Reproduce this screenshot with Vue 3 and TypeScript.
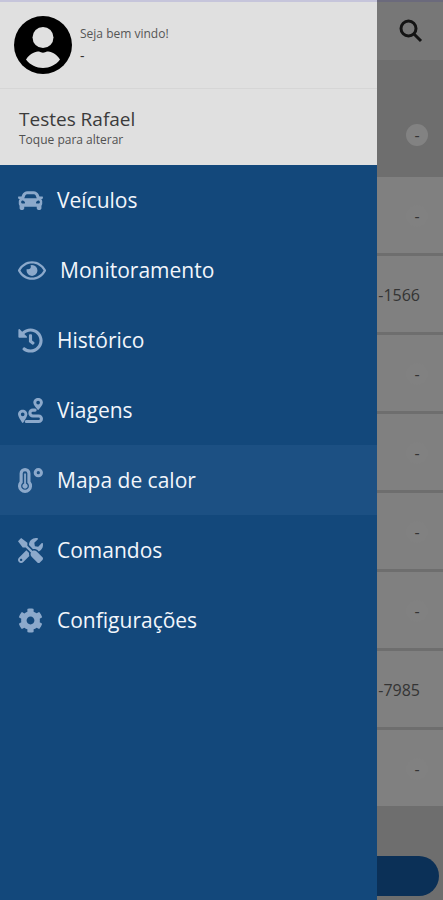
<script setup lang="ts">
import { ref } from 'vue'

interface MenuItem {
  id: string
  label: string
  viewBox: string
  path?: string
}

const items: MenuItem[] = [
  {
    id: 'veiculos',
    label: 'Veículos',
    viewBox: '0 0 512 512',
    path: 'M499.99 176h-59.87l-16.64-41.6C406.38 91.63 365.57 64 319.5 64h-127c-46.06 0-86.88 27.63-103.99 70.4L71.87 176H12.01C4.2 176-1.53 183.34.37 190.91l6 24C7.7 220.25 12.5 224 18.01 224h20.07C24.65 235.73 16 252.78 16 272v48c0 16.12 6.16 30.67 16 41.93V416c0 17.67 14.33 32 32 32h32c17.67 0 32-14.33 32-32v-32h256v32c0 17.67 14.33 32 32 32h32c17.67 0 32-14.33 32-32v-54.07c9.84-11.25 16-25.8 16-41.93v-48c0-19.22-8.65-36.27-22.07-48H494c5.51 0 10.31-3.75 11.64-9.09l6-24c1.89-7.57-3.84-14.91-11.65-14.91zm-352.06-17.83c7.29-18.22 24.94-30.17 44.57-30.17h127c19.63 0 37.28 11.95 44.57 30.17L384 208H128l19.93-49.83zM96 319.8c-19.2 0-32-12.76-32-31.9S76.8 256 96 256s48 28.71 48 47.85-28.8 15.95-48 15.95zm320 0c-19.2 0-48 3.19-48-15.95S396.8 256 416 256s32 12.76 32 31.9-12.8 31.9-32 31.9z',
  },
  {
    id: 'monitoramento',
    label: 'Monitoramento',
    viewBox: '0 0 576 512',
    path: 'M288 144a110.94 110.94 0 0 0-31.24 5 55.4 55.4 0 0 1 7.24 27 56 56 0 0 1-56 56 55.4 55.4 0 0 1-27-7.24A111.71 111.71 0 1 0 288 144zm284.52 97.4C518.29 135.59 410.93 64 288 64S57.68 135.64 3.48 241.41a32.35 32.35 0 0 0 0 29.19C57.71 376.41 165.07 448 288 448s230.32-71.64 284.52-177.41a32.35 32.35 0 0 0 0-29.19zM288 400c-98.65 0-189.09-55-237.93-144C98.91 167 189.34 112 288 112s189.09 55 237.93 144C477.1 345 386.66 400 288 400z',
  },
  {
    id: 'historico',
    label: 'Histórico',
    viewBox: '0 0 512 512',
    path: 'M504 255.531c.253 136.64-111.18 248.372-247.82 248.468-59.015.042-113.223-20.53-155.822-54.911-11.077-8.94-11.905-25.541-1.839-35.607l11.267-11.267c8.609-8.609 22.353-9.551 31.891-1.984C173.062 425.135 212.781 440 256 440c101.705 0 184-82.311 184-184 0-101.705-82.311-184-184-184-48.814 0-93.149 18.969-126.068 49.932l50.754 50.754c10.08 10.08 2.941 27.314-11.313 27.314H24c-8.837 0-16-7.163-16-16V38.627c0-14.254 17.234-21.393 27.314-11.314l49.372 49.372C129.209 34.136 189.552 8 256 8c136.81 0 247.747 110.78 248 247.531zm-180.912 78.784l9.823-12.63c8.138-10.463 6.253-25.542-4.21-33.679L288 256.349V152c0-13.255-10.745-24-24-24h-16c-13.255 0-24 10.745-24 24v135.651l65.409 50.874c10.463 8.137 25.541 6.253 33.679-4.21z',
  },
  { id: 'viagens', label: 'Viagens', viewBox: '0 0 512 512' },
  { id: 'mapa', label: 'Mapa de calor', viewBox: '0 0 512 512' },
  {
    id: 'comandos',
    label: 'Comandos',
    viewBox: '0 0 512 512',
    path: 'M501.1 395.7L384 278.6c-23.1-23.1-57.6-27.6-85.4-13.9L192 158.1V96L64 0 0 64l96 128h62.1l106.6 106.6c-13.6 27.8-9.2 62.3 13.9 85.4l117.1 117.1c14.6 14.6 38.2 14.6 52.7 0l52.7-52.7c14.5-14.6 14.5-38.2 0-52.7zM331.7 225c28.3 0 54.9 11 74.9 31l19.4 19.4c15.8-6.9 30.8-16.5 43.8-29.5 37.1-37.1 49.7-89.3 37.9-136.7-2.2-9-13.5-12.1-20.1-5.5l-74.4 74.4-67.9-11.3L334 98.9l74.4-74.4c6.6-6.6 3.4-17.9-5.7-20.2-47.4-11.7-99.6.9-136.6 37.9-28.5 28.5-41.9 66.1-41.2 103.6l82.1 82.1c8.1-1.9 16.5-2.9 24.7-2.9zm-103.9 82l-56.7-56.7L18.7 402.8c-25 25-25 65.5 0 90.5s65.5 25 90.5 0l123.6-123.6c-7.6-19.9-9.9-41.6-5-62.7zM64 472c-13.2 0-24-10.8-24-24 0-13.3 10.7-24 24-24s24 10.7 24 24c0 13.2-10.7 24-24 24z',
  },
  {
    id: 'config',
    label: 'Configurações',
    viewBox: '0 0 512 512',
    path: 'M487.4 315.7l-42.6-24.6c4.3-23.2 4.3-47 0-70.2l42.6-24.6c4.9-2.8 7.1-8.6 5.5-14-11.1-35.6-30-67.8-54.7-94.6-3.8-4.1-10-5.1-14.8-2.3L380.8 110c-17.9-15.4-38.5-27.3-60.8-35.1V25.8c0-5.6-3.9-10.5-9.4-11.7-36.7-8.2-74.3-7.8-109.2 0-5.5 1.2-9.4 6.1-9.4 11.7V75c-22.2 7.9-42.8 19.8-60.8 35.1L88.7 85.5c-4.9-2.8-11-1.9-14.8 2.3-24.7 26.7-43.6 58.9-54.7 94.6-1.7 5.4.6 11.2 5.5 14L67.3 221c-4.3 23.2-4.3 47 0 70.2l-42.6 24.6c-4.9 2.8-7.1 8.6-5.5 14 11.1 35.6 30 67.8 54.7 94.6 3.8 4.1 10 5.1 14.8 2.3l42.6-24.6c17.9 15.4 38.5 27.3 60.8 35.1v49.2c0 5.6 3.9 10.5 9.4 11.7 36.7 8.2 74.3 7.8 109.2 0 5.5-1.2 9.4-6.1 9.4-11.7v-49.2c22.2-7.9 42.8-19.8 60.8-35.1l42.6 24.6c4.9 2.8 11 1.9 14.8-2.3 24.7-26.7 43.6-58.9 54.7-94.6 1.5-5.5-.7-11.3-5.6-14.1zM256 336c-44.1 0-80-35.9-80-80s35.9-80 80-80 80 35.9 80 80-35.9 80-80 80z',
  },
]

const active = ref<string>('mapa')

const rows: string[] = ['-', '-1566', '-', '-', '-', '-', '-7985', '-']
</script>

<template>
  <div class="app">
    <aside class="drawer">
      <header class="user">
        <svg class="avatar" viewBox="0 0 58 58" aria-hidden="true">
          <circle class="avatar-disc" cx="29" cy="29" r="29" />
          <circle class="avatar-skin" cx="29" cy="21.500" r="10.500" />
          <path class="avatar-skin" d="M12 43.500C16 37 22.500 35.500 25 35.500C27.500 37 30.500 37 33 35.500C36 35.500 42 37 46 43.500C42 49 35.500 52 29 52C22.500 52 16 49 12 43.500Z" />
        </svg>
        <div class="greeting">
          <span>Seja bem vindo!</span>
          <span class="user-name">-</span>
        </div>
      </header>
      <button class="account" type="button">
        <span class="account-name">Testes Rafael</span>
        <span class="account-hint">Toque para alterar</span>
      </button>
      <nav class="menu">
        <a
          v-for="item in items"
          :key="item.id"
          class="item"
          :class="{ active: item.id === active }"
          :href="'#' + item.id"
          @click.prevent="active = item.id"
        >
          <svg class="icon" :class="{ wide: item.id === 'monitoramento' }" :viewBox="item.viewBox" aria-hidden="true">
            <path v-if="item.path" :d="item.path" />
            <g v-else-if="item.id === 'viagens'">
              <path fill-rule="evenodd" d="M96 240C43 240 0 282 0 334C0 382 48 444 82 500Q96 520 110 500C144 444 192 382 192 334C192 282 149 240 96 240ZM96 296A38 38 0 1 1 96 372A38 38 0 1 1 96 296Z" />
              <path fill-rule="evenodd" d="M412 0C358 0 314 42 314 94C314 138 362 192 398 238Q412 254 426 238C462 192 510 138 510 94C510 42 466 0 412 0ZM412 56A38 38 0 1 1 412 132A38 38 0 1 1 412 56Z" />
              <path class="line" d="M170 480H424A56 56 0 0 0 424 368H304A60 60 0 0 1 304 248H350" />
            </g>
            <g v-else>
              <path fill-rule="evenodd" d="M144 0A112 112 0 0 0 32 112V277A144 144 0 1 0 256 277V112A112 112 0 0 0 144 0ZM144 64A48 48 0 0 1 192 112V302A80 80 0 1 1 96 302V112A48 48 0 0 1 144 64Z" />
              <path d="M126 112H162V318A54 54 0 1 1 126 318Z" />
              <circle class="ring" cx="416" cy="96" r="64" />
            </g>
          </svg>
          <span>{{ item.label }}</span>
        </a>
      </nav>
    </aside>

    <main class="page">
      <div class="topbar">
        <button class="search" type="button" aria-label="Pesquisar">
          <svg viewBox="0 0 24 24" aria-hidden="true">
            <circle cx="9.500" cy="9.500" r="7.500" />
            <path d="M15 15L22 22" />
          </svg>
        </button>
      </div>
      <div class="summary"><span class="badge">-</span></div>
      <ul class="list">
        <li v-for="(row, i) in rows" :key="i">
          <span :class="{ badge: row === '-' }">{{ row }}</span>
        </li>
      </ul>
      <footer class="actions">
        <button class="action" type="button" aria-label="Continuar"></button>
      </footer>
    </main>
  </div>
</template>

<style>
body {
  margin: 0;
  background: #6e6e6e;
}
</style>

<style scoped>
.app {
  box-sizing: border-box;
  display: grid;
  grid-template-columns: minmax(0, 1fr) 66px;
  min-height: 100vh;
  font-family: 'Open Sans', 'Noto Sans', sans-serif;
}

.drawer {
  display: flex;
  flex-direction: column;
  background: #13487b;
  border-top: 2px solid #c6c5db;
}

.user {
  box-sizing: border-box;
  display: flex;
  align-items: center;
  gap: 8px;
  height: 87px;
  padding: 0 14px;
  background: #e0e0e0;
  border-bottom: 1px solid #d6d6d6;
}

.avatar {
  width: 58px;
  height: 58px;
}

.avatar-disc {
  fill: #000;
}

.avatar-skin {
  fill: #e0e0e0;
}

.greeting {
  display: flex;
  flex-direction: column;
  font-size: 12px;
  line-height: 22px;
  color: #555;
}

.user-name {
  font-size: 14px;
  color: #333;
}

.account {
  box-sizing: border-box;
  display: flex;
  flex-direction: column;
  justify-content: center;
  height: 76px;
  padding: 0 19px;
  border: 0;
  background: #e0e0e0;
  font-family: inherit;
  text-align: left;
}

.account-name {
  font-size: 19px;
  line-height: 26px;
  color: #3b3b3b;
}

.account-hint {
  font-size: 12px;
  line-height: 16px;
  color: #505050;
}

.menu {
  display: flex;
  flex-direction: column;
  flex: 1;
}

.item {
  display: flex;
  align-items: center;
  gap: 14px;
  height: 70px;
  padding: 0 18px;
  font-size: 21px;
  color: #f2f6fb;
  text-decoration: none;
}

.item.active {
  background: #1c5083;
}

.icon {
  width: 25px;
  height: 25px;
  fill: #8ca9cb;
}

.icon.wide {
  width: 28px;
}

.line,
.ring {
  fill: none;
  stroke: #8ca9cb;
}

.line {
  stroke-width: 64;
  stroke-linecap: round;
}

.ring {
  stroke-width: 62;
}

.page {
  display: flex;
  flex-direction: column;
  background: #6e6e6e;
  border-top: 2px solid #6b6a7c;
  color: #343434;
  font-size: 16px;
}

.topbar {
  display: flex;
  align-items: center;
  justify-content: flex-end;
  height: 58px;
  padding-right: 20px;
  background: #777;
}

.search {
  padding: 0;
  border: 0;
  background: none;
}

.search svg {
  display: block;
  width: 24px;
  height: 24px;
  fill: none;
  stroke: #141414;
  stroke-width: 3;
}

.summary {
  box-sizing: border-box;
  display: flex;
  justify-content: flex-end;
  height: 117px;
  padding: 64px 15px 0 0;
}

.badge {
  width: 22px;
  height: 22px;
  border-radius: 50%;
  background: #828282;
  line-height: 22px;
  text-align: center;
}

.list {
  display: flex;
  flex-direction: column;
  gap: 3px;
  margin: 0;
  padding: 0;
  list-style: none;
}

.list li {
  box-sizing: border-box;
  display: flex;
  align-items: center;
  justify-content: flex-end;
  height: 76px;
  padding: 2px 23px 0 0;
  background: #808080;
}

.list li:has(.badge) {
  padding-right: 15px;
}

.list .badge {
  background: #818181;
}

.actions {
  display: flex;
  flex: 1;
  align-items: flex-end;
  padding: 0 4px 4px 0;
}

.action {
  width: 100%;
  height: 40px;
  border: 0;
  border-radius: 0 20px 20px 0;
  background: #0b3057;
}
</style>
